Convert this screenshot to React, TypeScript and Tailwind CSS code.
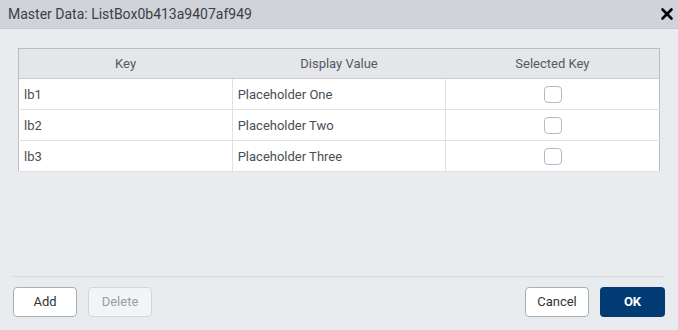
import { X } from 'lucide-react';

const rows = [
    { key: 'lb1', value: 'Placeholder One' },
    { key: 'lb2', value: 'Placeholder Two' },
    { key: 'lb3', value: 'Placeholder Three' },
];

const App = () => {
    return (
        <div className="flex flex-col w-[678px] h-[330px] bg-[#e9ecef] font-['Roboto',sans-serif] overflow-hidden">
            <div className="flex items-center justify-between h-[29px] pl-2 pr-[2px] bg-[#d0d4da] border-b border-[#c6cad0]">
                <span className="text-[14px] text-[#3b3f44]">Master Data: ListBox0b413a9407af949</span>
                <X className="w-[18px] h-[18px] text-black" strokeWidth={3.5} />
            </div>

            <div className="flex-1 px-[18px] pt-[19px]">
                <table className="w-full table-fixed border-collapse border border-[#b9bec4] text-[13px]">
                    <thead>
                        <tr className="h-[30px] bg-[#e4e6e9] text-[#555a60]">
                            <th className="font-normal border-b border-[#c9cdd2]">Key</th>
                            <th className="font-normal border-b border-[#c9cdd2]">Display Value</th>
                            <th className="font-normal border-b border-[#c9cdd2]">Selected Key</th>
                        </tr>
                    </thead>
                    <tbody>
                        {rows.map((row) => (
                            <tr key={row.key} className="h-[31px] bg-white text-[#4a4e53] border-b border-[#dfe2e5]">
                                <td className="pl-[5px] pt-[2px] border-r border-[#dfe2e5]">{row.key}</td>
                                <td className="pl-[5px] pt-[2px] border-r border-[#dfe2e5]">{row.value}</td>
                                <td>
                                    <div className="mx-auto w-[18px] h-[17px] rounded-[4px] border border-[#b4b9bf] bg-white" />
                                </td>
                            </tr>
                        ))}
                    </tbody>
                </table>
            </div>

            <div className="mx-[13px] border-t border-[#d3d7dc] pt-[10px] pb-[13px] flex justify-between">
                <div className="flex gap-[11px]">
                    <button className="w-16 h-[30px] rounded-[4px] border border-[#a9aeb4] bg-white text-[13px] text-[#333]">
                        Add
                    </button>
                    <button className="w-16 h-[30px] rounded-[4px] border border-[#d3d7dc] bg-[#f2f4f6] text-[13px] text-[#9a9ea3]">
                        Delete
                    </button>
                </div>
                <div className="flex gap-[11px]">
                    <button className="w-16 h-[30px] rounded-[4px] border border-[#a9aeb4] bg-white text-[13px] text-[#333]">
                        Cancel
                    </button>
                    <button className="w-[65px] h-[30px] rounded-[4px] bg-[#003b73] text-[13px] font-bold text-white">
                        OK
                    </button>
                </div>
            </div>
        </div>
    );
};

export default App;
